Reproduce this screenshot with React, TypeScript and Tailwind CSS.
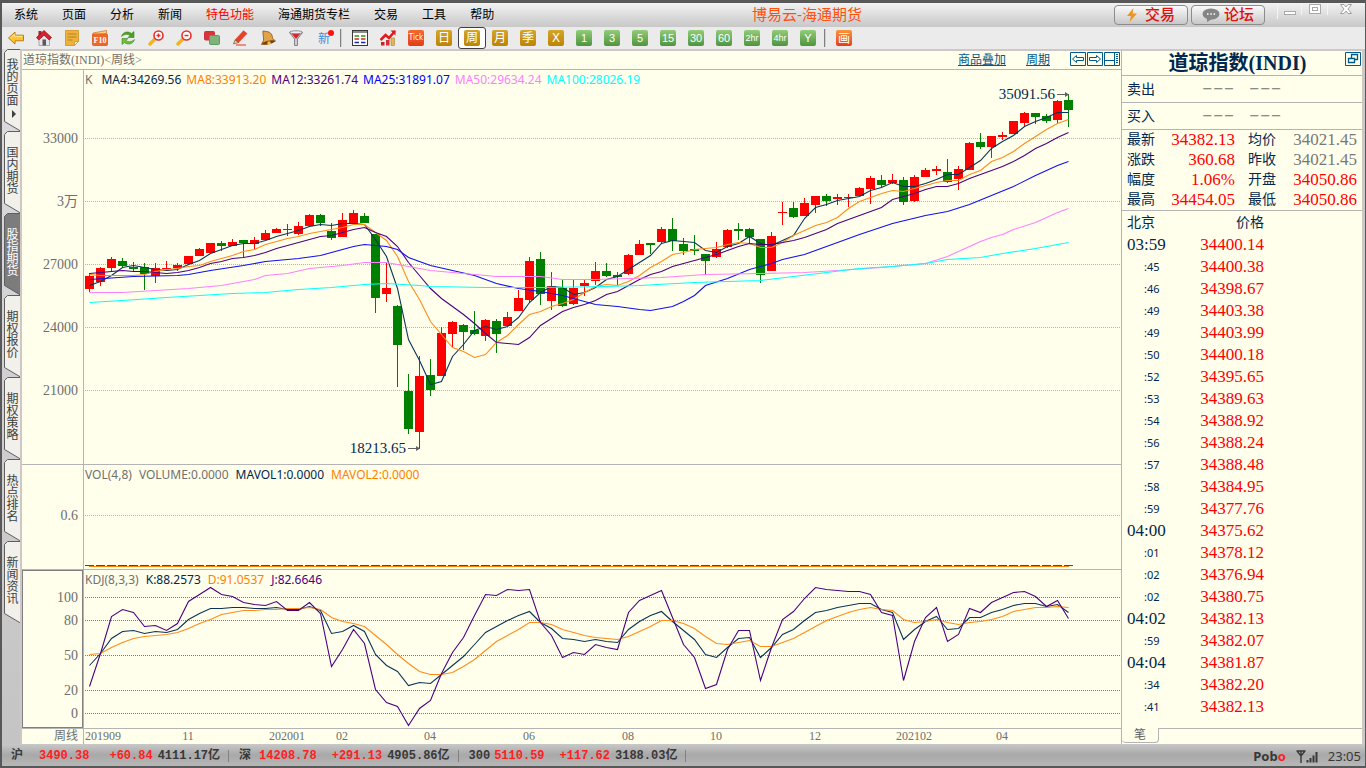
import type { ReactNode } from 'react';

const SERIF = "font-['Liberation_Serif','Noto_Sans_CJK_SC',serif]";
const SANS = "font-['Noto_Sans','Noto_Sans_CJK_SC',sans-serif]";
const MONO = "font-['Liberation_Mono','Noto_Sans_CJK_SC',monospace]";

const menus = ['系统', '页面', '分析', '新闻', '特色功能', '海通期货专栏', '交易', '工具', '帮助'];

const sideTabs = ['我的页面', '国内期货', '股指期货', '期权报价', '期权策略', '热点排名', '新闻资讯'];

const periods = [
  { label: '日', kind: 'gold' },
  { label: '周', kind: 'gold' },
  { label: '月', kind: 'gold' },
  { label: '季', kind: 'gold' },
  { label: 'X', kind: 'gold' },
  { label: '1', kind: 'green' },
  { label: '3', kind: 'green' },
  { label: '5', kind: 'green' },
  { label: '15', kind: 'green' },
  { label: '30', kind: 'green' },
  { label: '60', kind: 'green' },
  { label: '2hr', kind: 'green' },
  { label: '4hr', kind: 'green' },
  { label: 'Y', kind: 'green' },
];

// [direction, high, body top, body bottom, low]
type Candle = [string, number, number, number, number];

const candles: Candle[] = [
  ['r', 273, 276, 289, 292], ['r', 267, 268, 282, 286], ['r', 257, 259, 268, 271],
  ['g', 258, 261, 266, 268], ['g', 262, 267, 269, 271], ['g', 263, 267, 274, 290],
  ['r', 263, 268, 276, 283], ['r', 261, 268, 269, 269], ['r', 263, 265, 268, 271],
  ['r', 256, 256, 264, 264], ['r', 248, 249, 256, 256], ['r', 243, 243, 253, 253],
  ['g', 241, 243, 246, 251], ['r', 239, 242, 246, 246], ['g', 240, 240, 243, 258],
  ['r', 237, 240, 244, 249], ['r', 230, 233, 240, 240], ['r', 228, 229, 233, 233],
  ['g', 224, 229, 230, 236], ['r', 222, 226, 234, 235], ['r', 214, 215, 226, 227],
  ['g', 214, 215, 223, 226], ['g', 223, 231, 238, 240], ['r', 213, 220, 237, 237],
  ['r', 210, 213, 224, 224], ['g', 213, 216, 223, 223], ['g', 234, 234, 298, 313],
  ['r', 263, 288, 294, 302], ['g', 305, 306, 345, 387], ['g', 374, 391, 429, 434],
  ['r', 356, 376, 432, 449], ['g', 359, 375, 390, 396], ['r', 327, 333, 376, 376],
  ['r', 321, 322, 334, 347], ['g', 324, 325, 332, 350], ['g', 311, 330, 334, 335],
  ['r', 319, 320, 336, 341], ['g', 319, 321, 334, 353], ['r', 312, 317, 326, 326],
  ['r', 290, 298, 311, 311], ['r', 257, 261, 300, 303], ['g', 252, 259, 294, 305],
  ['r', 272, 286, 301, 310], ['g', 279, 288, 306, 307], ['r', 280, 288, 304, 305],
  ['r', 280, 283, 286, 296], ['r', 262, 271, 281, 285], ['g', 263, 271, 276, 277],
  ['g', 272, 275, 277, 285], ['r', 254, 255, 274, 275], ['r', 240, 244, 255, 255],
  ['g', 243, 243, 245, 254], ['r', 227, 229, 242, 244], ['g', 218, 229, 241, 251],
  ['g', 238, 244, 251, 255], ['g', 235, 249, 251, 255], ['g', 254, 254, 261, 274],
  ['r', 242, 249, 257, 258], ['r', 229, 230, 247, 248], ['g', 223, 229, 231, 240],
  ['g', 228, 229, 237, 243], ['g', 239, 239, 275, 283], ['r', 232, 236, 271, 271],
  ['r', 202, 212, 213, 225], ['g', 202, 208, 217, 218], ['r', 198, 203, 216, 216],
  ['r', 196, 196, 205, 213], ['g', 194, 196, 201, 206], ['r', 194, 197, 199, 205],
  ['r', 194, 197, 198, 207], ['r', 187, 188, 196, 196], ['r', 176, 178, 189, 204],
  ['g', 175, 180, 185, 188], ['r', 174, 180, 183, 184], ['g', 177, 180, 202, 205],
  ['r', 175, 177, 201, 202], ['r', 168, 170, 177, 177], ['r', 166, 169, 171, 175],
  ['g', 159, 172, 182, 183], ['r', 166, 169, 179, 190], ['r', 142, 143, 170, 170],
  ['g', 133, 142, 147, 149], ['r', 136, 136, 147, 158], ['r', 132, 135, 137, 140],
  ['r', 121, 121, 134, 134], ['r', 112, 113, 123, 126], ['g', 113, 113, 117, 124],
  ['g', 114, 116, 121, 123], ['r', 100, 101, 120, 123], ['g', 94, 100, 110, 127],
];

const ma4 = [285, 281, 275, 267, 265, 267, 269, 270, 269, 264, 260, 253, 249, 245, 243, 243, 240, 236, 233, 230, 226, 224, 225, 223, 223, 224, 239, 256, 288, 339, 360, 384, 381, 356, 344, 330, 326, 329, 326, 317, 302, 292, 286, 287, 294, 292, 287, 279, 276, 269, 262, 255, 243, 240, 241, 242, 250, 252, 246, 243, 236, 243, 245, 240, 235, 218, 207, 204, 200, 198, 196, 190, 187, 182, 186, 186, 183, 179, 174, 174, 167, 160, 148, 141, 135, 126, 121, 117, 112, 112];
const ma8 = [274, 275, 275, 275, 275, 274, 271, 269, 268, 266, 265, 261, 258, 255, 251, 249, 244, 241, 238, 236, 233, 231, 229, 227, 224, 224, 232, 240, 256, 281, 299, 321, 334, 347, 351, 357, 354, 342, 335, 324, 314, 311, 306, 303, 299, 292, 286, 284, 285, 281, 275, 267, 261, 254, 252, 249, 248, 247, 244, 242, 243, 247, 247, 242, 235, 230, 225, 222, 217, 208, 201, 197, 193, 190, 191, 188, 185, 182, 180, 180, 174, 170, 161, 157, 151, 143, 136, 129, 123, 119];
const ma12 = [273, 272, 271, 270, 271, 271, 272, 273, 272, 270, 267, 263, 261, 258, 257, 255, 252, 248, 245, 242, 239, 236, 235, 232, 229, 227, 232, 236, 246, 262, 275, 288, 298, 306, 314, 323, 333, 342, 343, 344, 337, 325, 318, 311, 307, 304, 300, 294, 291, 285, 279, 274, 271, 266, 263, 260, 257, 254, 250, 246, 243, 244, 244, 242, 240, 237, 233, 229, 223, 219, 215, 211, 207, 199, 196, 193, 189, 186, 186, 183, 178, 174, 170, 166, 161, 155, 148, 143, 137, 132];

// slower averages only need a knot where the slope changes: [bar index, y]
type Knot = [number, number];

const ma25: Knot[] = [[0, 279], [4, 276], [8, 275], [9, 274], [11, 270], [14, 265], [16, 261], [19, 258], [21, 255], [22, 252], [24, 246], [25, 244], [27, 246], [28, 249], [29, 257], [31, 265], [35, 275], [37, 283], [39, 288], [41, 291], [43, 295], [45, 301], [46, 304], [48, 306], [50, 309], [51, 310], [52, 308], [53, 306], [54, 301], [55, 295], [56, 285], [58, 278], [60, 269], [62, 263], [63, 259], [65, 254], [66, 250], [70, 234], [73, 223], [76, 215], [78, 211], [80, 204], [82, 195], [84, 186], [86, 175], [88, 165], [89, 161]];
const ma50: Knot[] = [[0, 292], [3, 292], [6, 290], [9, 288], [12, 285], [15, 279], [16, 275], [18, 273], [20, 268], [23, 265], [25, 262], [27, 262], [29, 266], [31, 270], [35, 274], [37, 276], [41, 276], [43, 279], [46, 279], [49, 278], [52, 277], [56, 274], [61, 273], [65, 272], [68, 270], [72, 267], [74, 265], [76, 263], [78, 256], [79, 251], [81, 241], [82, 237], [83, 234], [84, 229], [86, 222], [88, 212], [89, 208]];
const ma100: Knot[] = [[0, 302], [3, 300], [7, 297], [10, 295], [13, 293], [16, 292], [19, 289], [22, 287], [25, 284], [27, 283], [30, 285], [31, 286], [36, 287], [41, 287], [47, 286], [50, 285], [55, 282], [58, 281], [61, 280], [64, 276], [67, 272], [70, 268], [73, 266], [76, 263], [78, 259], [81, 257], [83, 253], [86, 248], [89, 242]];

const kLine = [665, 653, 638, 631, 630, 633, 631, 632, 629, 619, 613, 608, 608, 607, 607, 608, 608, 607, 609, 609, 606, 610, 633, 631, 625, 631, 654, 665, 671, 685, 682, 683, 674, 665, 656, 644, 632, 626, 620, 615, 611, 622, 628, 638, 639, 641, 639, 641, 642, 629, 621, 615, 611, 621, 630, 639, 654, 657, 647, 638, 637, 657, 647, 634, 629, 620, 612, 610, 607, 605, 603, 603, 609, 612, 639, 629, 621, 616, 629, 628, 617, 617, 612, 609, 605, 603, 603, 606, 604, 612];
const dLine = [654, 653, 647, 642, 638, 636, 635, 634, 632, 628, 623, 619, 614, 612, 610, 610, 609, 609, 608, 608, 607, 609, 617, 621, 623, 626, 635, 644, 654, 663, 671, 674, 674, 672, 666, 659, 650, 641, 635, 629, 622, 622, 624, 629, 632, 635, 637, 638, 639, 636, 631, 626, 620, 620, 623, 628, 636, 643, 644, 642, 640, 646, 646, 642, 638, 632, 626, 620, 616, 612, 609, 607, 609, 610, 619, 622, 621, 619, 622, 624, 622, 621, 619, 616, 611, 609, 607, 607, 606, 607];
const jLine = [686, 653, 616, 609, 612, 626, 625, 630, 623, 601, 594, 587, 594, 596, 602, 604, 605, 601, 610, 610, 602, 613, 666, 649, 629, 643, 689, 702, 706, 725, 708, 700, 673, 652, 637, 615, 594, 595, 589, 590, 589, 622, 635, 657, 652, 654, 644, 647, 649, 612, 600, 595, 590, 617, 644, 657, 688, 684, 649, 630, 630, 680, 647, 619, 611, 598, 587, 589, 590, 591, 591, 594, 612, 615, 680, 641, 617, 607, 641, 634, 608, 612, 602, 597, 592, 591, 596, 606, 600, 618];

const quotes = [
  ['最新', '34382.13', 'text-[#ff0000]', '均价', '34021.45', 'text-[#787878]'],
  ['涨跌', '360.68', 'text-[#ff0000]', '昨收', '34021.45', 'text-[#787878]'],
  ['幅度', '1.06%', 'text-[#ff0000]', '开盘', '34050.86', 'text-[#ff0000]'],
  ['最高', '34454.05', 'text-[#ff0000]', '最低', '34050.86', 'text-[#ff0000]'],
];

const ticks = [
  ['03:59', '34400.14'], [':45', '34400.38'], [':46', '34398.67'], [':49', '34403.38'],
  [':49', '34403.99'], [':50', '34400.18'], [':52', '34395.65'], [':53', '34389.63'],
  [':54', '34388.92'], [':56', '34388.24'], [':57', '34388.48'], [':58', '34384.95'],
  [':59', '34377.76'], ['04:00', '34375.62'], [':01', '34378.12'], [':02', '34376.94'],
  [':02', '34380.75'], ['04:02', '34382.13'], [':59', '34382.07'], ['04:04', '34381.87'],
  [':34', '34382.20'], [':41', '34382.13'],
];

const dates: [string, number][] = [
  ['201909', 102], ['11', 187], ['202001', 286], ['02', 341], ['04', 429], ['06', 528],
  ['08', 627], ['10', 715], ['12', 814], ['202102', 913], ['04', 1001],
];

const barX = (i: number) => 89 + i * 11;
const dense = (ys: number[]) => ys.map((y, i) => `${barX(i) + 0.5},${y + 0.5}`).join(' ');
const sparse = (ks: Knot[]) => ks.map(([i, y]) => `${barX(i) + 0.5},${y + 0.5}`).join(' ');

function Curve({ points, color }: { points: string; color: string }) {
  return <polyline points={points} fill="none" stroke={color} strokeWidth="1.1" />;
}

// lines span the full width of the plot whatever the window size
function Grid({ ys, top, color }: { ys: number[]; top: number; color: string }) {
  return (
    <>
      {ys.map((y) => (
        <line key={y} x1="1" x2="100%" y1={y - top + 0.5} y2={y - top + 0.5} stroke={color} strokeDasharray="1 1" shapeRendering="crispEdges" />
      ))}
    </>
  );
}

function Axis({ labels, top, height }: { labels: [string, number][]; top: number; height: number }) {
  return (
    <svg width="61" height={height} className={`block shrink-0 text-[14px] ${SERIF}`} fill="#6e6e6e">
      {labels.map(([text, y]) => (
        <text key={text} x="56" y={y - top + 5} textAnchor="end">{text}</text>
      ))}
    </svg>
  );
}

function PriceChart() {
  return (
    <svg className="block h-[374px] w-full overflow-visible">
      <Grid ys={[138, 201, 264, 327, 390]} top={90} color="#b4b4b0" />
      <g transform="translate(-84 -90)">
        {candles.map(([dir, high, top, bottom, low], i) => (
          <g key={i} fill={dir === 'r' ? '#ff0000' : '#008000'} shapeRendering="crispEdges">
            <rect x={barX(i)} y={high} width="1" height={low - high} />
            <rect x={barX(i) - 4} y={top} width="9" height={bottom - top} />
          </g>
        ))}
        <Curve points={dense(ma4)} color="#0a3558" />
        <Curve points={dense(ma8)} color="#ff8c1a" />
        <Curve points={dense(ma12)} color="#4b0082" />
        <Curve points={sparse(ma25)} color="#1010f0" />
        <Curve points={sparse(ma50)} color="#ff80ff" />
        <Curve points={sparse(ma100)} color="#00ffff" />
        <g fill="#002850" className={`text-[15px] ${SERIF}`}>
          <text x="1055" y="99" textAnchor="end">35091.56</text>
          <text x="406" y="453" textAnchor="end">18213.65</text>
        </g>
        <g stroke="#606060" fill="#606060">
          <path d="M1057 94.5H1068M408 448.5H419" />
          <path d="M1065 92l4 2.5-4 2.5zM416 446l4 2.5-4 2.5z" stroke="none" />
        </g>
      </g>
    </svg>
  );
}

function VolumeChart() {
  return (
    <svg className="block h-[84px] w-full">
      <Grid ys={[515]} top={485} color="#b4b4b0" />
      <g transform="translate(-84 -485)" shapeRendering="crispEdges">
        {candles.map(([dir], i) => (
          <rect key={i} x={barX(i) - 4} y="565" width="9" height="1" fill={dir === 'r' ? '#ff0000' : '#008000'} />
        ))}
        <rect x="89" y="566" width="980" height="1" fill="#ff8000" />
      </g>
    </svg>
  );
}

function KdjChart() {
  return (
    <svg className="block h-[138px] w-full overflow-visible">
      <Grid ys={[597, 620, 655, 690, 713]} top={590} color="#7c7c78" />
      <g transform="translate(-84 -590)">
        <Curve points={dense(kLine)} color="#0a3558" />
        <Curve points={dense(dLine)} color="#ff8c1a" />
        <Curve points={dense(jLine)} color="#4b0082" />
      </g>
    </svg>
  );
}

function Legend({ items, gap }: { items: [string, string][]; gap: string }) {
  return (
    <div className={`flex h-5 items-center pl-px text-[12px] whitespace-nowrap ${gap} ${SANS}`}>
      {items.map(([text, color]) => (
        <span key={text} className={color}>{text}</span>
      ))}
    </div>
  );
}

function ToolButton({ label, children, active }: { label: string; children: ReactNode; active?: boolean }) {
  return (
    <button
      type="button"
      aria-label={label}
      className={`flex h-[22px] w-7 shrink-0 items-center justify-center ${active ? 'rounded-[3px] border border-[#404040] bg-white' : ''}`}
    >
      {children}
    </button>
  );
}

function Icon({ children }: { children: ReactNode }) {
  return <svg width="16" height="16" viewBox="0 0 16 16">{children}</svg>;
}

function Separator() {
  return <span className="mr-1 ml-0.5 h-[18px] w-0.5 shrink-0 border-l border-[#808080] bg-[#d0d0d0]" />;
}

function Toolbar() {
  return (
    <div className="flex h-[22px] items-center bg-[#ebebeb]">
      <ToolButton label="后退">
        <Icon>
          <path d="M0.5 8L7 2v3.2h8.500v5.600H7V14z" fill="#fdc52f" stroke="#b97f14" />
          <path d="M2.500 8L6.500 4.300v2h8" fill="none" stroke="#ffe892" />
        </Icon>
      </ToolButton>
      <ToolButton label="首页">
        <Icon>
          <path d="M3 8v7.500h10.500V8L8 3z" fill="#e4e4ea" stroke="#8f8f98" strokeWidth="0.700" />
          <rect x="2.500" y="1" width="3" height="5" fill="#9a2830" />
          <path d="M8 0.500L0.500 7.500l2.300 2.500L8 5.200l5.200 4.800L15.500 7.500z" fill="#d8222c" stroke="#8c1018" strokeWidth="0.700" />
          <rect x="6.500" y="9.500" width="3.500" height="6" fill="#575862" />
        </Icon>
      </ToolButton>
      <ToolButton label="便签">
        <Icon>
          <path d="M1.500 0.500h13v11l-4 4h-9z" fill="#eeb13c" stroke="#d79d32" />
          <path d="M14.500 11.500l-4 4v-4z" fill="#fff0b4" stroke="#c98d22" strokeWidth="0.700" />
          <path d="M3.500 4h9M3.500 7h9M3.500 10h5" stroke="#b98220" />
        </Icon>
      </ToolButton>
      <ToolButton label="F10 资料">
        <Icon>
          <path d="M1 3l13.500-2.500v3L1 5z" fill="#ffd27a" stroke="#cf6d22" strokeWidth="0.700" />
          <rect x="0.500" y="4" width="15" height="11.500" rx="1" fill="#ec6a28" stroke="#e0652b" />
          <text x="8" y="13" textAnchor="middle" fill="#fff" className="font-['Liberation_Serif',serif] text-[8px] font-bold">F10</text>
        </Icon>
      </ToolButton>
      <ToolButton label="刷新">
        <Icon>
          <path d="M1.500 6.500C2.500 2 8 0.500 11.500 3.500L14 1.500v6H8l2-2C7.500 3.500 4.500 4 1.500 6.500z" fill="#47a51f" stroke="#2c7412" strokeWidth="0.500" />
          <path d="M14.500 9.500C13.500 14 8 15.500 4.500 12.500L2 14.500v-6h6l-2 2c2.500 2 5.500 1.500 8.500-1z" fill="#6cc437" stroke="#2c7412" strokeWidth="0.500" />
        </Icon>
      </ToolButton>
      <ToolButton label="放大">
        <Icon>
          <path d="M6.500 9.500L2 14" stroke="#f3b416" strokeWidth="3.500" strokeLinecap="round" />
          <circle cx="10.500" cy="5.500" r="4.500" fill="#fff" stroke="#e0322c" strokeWidth="1.600" />
          <path d="M8.500 5.500h4M10.500 3.500v4" stroke="#e0322c" strokeWidth="1.500" />
        </Icon>
      </ToolButton>
      <ToolButton label="缩小">
        <Icon>
          <path d="M6.500 9.500L2 14" stroke="#f3b416" strokeWidth="3.500" strokeLinecap="round" />
          <circle cx="10.500" cy="5.500" r="4.500" fill="#fff" stroke="#e0322c" strokeWidth="1.600" />
          <path d="M8.500 5.500h4" stroke="#e0322c" strokeWidth="1.500" />
        </Icon>
      </ToolButton>
      <ToolButton label="叠加">
        <Icon>
          <rect x="0.500" y="1.500" width="10" height="8.500" rx="1" fill="#d9343a" stroke="#c9353c" />
          <rect x="5.500" y="5.500" width="10" height="9" rx="1" fill="#7fb37c" stroke="#5b9a60" />
        </Icon>
      </ToolButton>
      <ToolButton label="画线">
        <Icon>
          <path d="M3 10L11.500 0.800l3.500 2.700L6.500 12.500z" fill="#e8412a" stroke="#d8341f" strokeWidth="0.600" />
          <path d="M3 10l3.500 2.500L1.500 14z" fill="#f3d0a0" stroke="#5b3a22" strokeWidth="0.600" />
          <path d="M4 15h10" stroke="#f04b3c" strokeWidth="1.200" />
        </Icon>
      </ToolButton>
      <ToolButton label="预警">
        <Icon>
          <path d="M3 1l3.500 0.500C11 2 12.500 5 12.500 8.500L15.500 11 1.500 14.500 3.500 10.500C4 7 2.500 4 3 1z" fill="#e0a448" stroke="#8a4f10" strokeWidth="0.800" />
          <ellipse cx="8.500" cy="12.500" rx="6.500" ry="1.800" fill="#7c3d0c" transform="rotate(-13 8.500 12.500)" />
          <circle cx="9" cy="13" r="1.800" fill="#f1c04a" />
        </Icon>
      </ToolButton>
      <ToolButton label="筛选">
        <Icon>
          <path d="M1.500 2.500L6.500 9v6.500h3V9l5-6.500z" fill="#c9ccd0" stroke="#6d7076" strokeWidth="0.800" />
          <path d="M3.500 3.500h9L8 9z" fill="#e2202a" />
          <ellipse cx="8" cy="2.300" rx="6.500" ry="1.500" fill="#eceef0" stroke="#77797e" strokeWidth="0.800" />
        </Icon>
      </ToolButton>
      <ToolButton label="新功能">
        <span className="relative font-['Noto_Sans_CJK_SC',sans-serif] text-[12px] leading-4 text-[#3d8edb]">
          新
          <i className="absolute top-0 right-[-4px] size-[6px] rounded-full bg-[#ff1010]" />
        </span>
      </ToolButton>
      <Separator />
      <ToolButton label="报价表">
        <Icon>
          <rect x="0.500" y="0.500" width="15" height="15" fill="#fff" stroke="#383838" />
          <path d="M1 2h14" stroke="#8a8a8a" strokeWidth="2" />
          <path d="M2.500 6h4.500M9 6h4.500" stroke="#1b9b1b" strokeWidth="1.300" />
          <path d="M2.500 9h4.500M9 9h4.500" stroke="#e02020" strokeWidth="1.300" />
          <path d="M2.500 12.500h4.500M9 12.500h4.500" stroke="#1c2a9c" strokeWidth="1.300" />
        </Icon>
      </ToolButton>
      <ToolButton label="走势图">
        <Icon>
          <path d="M0.500 10l5-5 3.500 3L15 1" fill="none" stroke="#e01b1b" strokeWidth="2.500" />
          <path d="M10.500 0.500h5V5.500z" fill="#e01b1b" />
          <rect x="1" y="12" width="3.500" height="3.500" fill="#c22" />
          <rect x="6" y="10" width="3.500" height="5.500" fill="#d43030" />
          <rect x="11" y="8" width="3.500" height="7.500" fill="#e2b65a" stroke="#9c7020" strokeWidth="0.500" />
        </Icon>
      </ToolButton>
      <ToolButton label="Tick">
        <span className="flex size-4 items-center justify-center rounded-[2px] bg-linear-to-b from-[#f56a2c] to-[#e33a1a] font-['DejaVu_Sans_Condensed','Noto_Sans',sans-serif] text-[8px] text-white">Tick</span>
      </ToolButton>
      {periods.map(({ label, kind }) => (
        <ToolButton key={label} label={`周期 ${label}`} active={label === '周'}>
          <span
            className={`flex size-4 items-center justify-center rounded-[2px] bg-linear-to-b font-['Liberation_Sans','Noto_Sans_CJK_SC',sans-serif] leading-4 text-white ${
              kind === 'gold' ? 'from-[#d3a52a] to-[#bd8400] text-[12px]' : 'from-[#93cc78] to-[#4f9440]'
            } ${kind === 'green' ? (label.length > 2 ? 'text-[9px]' : 'text-[11px]') : ''}`}
          >
            {label}
          </span>
        </ToolButton>
      ))}
      <Separator />
      <ToolButton label="画面">
        <span className="flex size-4 items-center justify-center rounded-[2px] bg-linear-to-b from-[#f7953a] to-[#e63a1a] font-['Noto_Sans_CJK_SC',sans-serif] text-[12px] leading-4 text-white">画</span>
      </ToolButton>
    </div>
  );
}

function TitleBar() {
  return (
    <header className="flex h-6 items-center bg-linear-to-b from-[#f2f2f2] to-[#c8c8c8] font-['Liberation_Sans','Noto_Sans_CJK_SC',sans-serif]">
      <nav className="flex gap-6 pl-3 text-[12px] text-black">
        {menus.map((m) => (
          <button key={m} type="button" className={`whitespace-nowrap ${m === '特色功能' ? 'text-[#ff0000]' : ''}`}>{m}</button>
        ))}
      </nav>
      <h1 className="flex-1 pl-1.5 text-center text-[15px] leading-5 whitespace-nowrap text-[#ff5010]">博易云-海通期货</h1>
      <div className="flex gap-[3px]">
        <button type="button" className="flex h-5 w-[74px] items-center justify-center gap-2 rounded border border-[#8c8c8c] bg-linear-to-b from-[#fafafa] to-[#c8c8c8] text-[15px] leading-4 font-medium text-[#e01010]">
          <svg width="10" height="14" viewBox="0 0 10 14"><path d="M6.500 0L0 8h4L2.500 14 10 5.500H5.500z" fill="#f0921e" /></svg>
          交易
        </button>
        <button type="button" className="flex h-5 w-[74px] items-center justify-center gap-1 rounded border border-[#8c8c8c] bg-linear-to-b from-[#fafafa] to-[#c8c8c8] text-[15px] leading-4 font-medium text-[#e01010]">
          <svg width="18" height="14" viewBox="0 0 18 14">
            <ellipse cx="9" cy="6" rx="8.500" ry="5.500" fill="#858585" />
            <path d="M5 10v4l5-3z" fill="#858585" />
            <path d="M5 6h1.500M8.300 6h1.500M11.600 6h1.500" stroke="#fff" strokeWidth="1.500" />
          </svg>
          论坛
        </button>
      </div>
      <div className="mr-0.5 ml-3 flex self-start">
        <button type="button" aria-label="最小化" className="flex h-4 w-6 items-center justify-center border-l border-[#f4f4f4]">
          <svg width="12" height="12"><rect x="0.500" y="6.500" width="11" height="3" fill="#fff" stroke="#a8a8a8" /></svg>
        </button>
        <button type="button" aria-label="最大化" className="flex h-3 w-[26px] items-center justify-center border-l border-[#f4f4f4]">
          <svg width="12" height="10"><rect x="0.500" y="0.500" width="11" height="9" fill="#fff" stroke="#a8a8a8" /><rect x="3.500" y="3.500" width="5" height="3" fill="#fff" stroke="#a8a8a8" /></svg>
        </button>
        <button type="button" aria-label="关闭" className="flex h-3 w-9 items-center justify-center border-l border-[#f4f4f4]">
          <svg width="12" height="10" viewBox="0 0 12 10"><path d="M0.500 0.500h3.500l2 2.500 2-2.500h3.500L8 5l3.500 4.500H8L6 7 4 9.500H0.500L4 5z" fill="#fff" stroke="#a0a0a0" /></svg>
        </button>
      </div>
    </header>
  );
}

function SideTabs() {
  return (
    <aside className="flex w-[18px] shrink-0 flex-col items-end bg-linear-to-b from-[#dcdce0] to-[#c4c4c4]">
      {sideTabs.map((t, i) => {
        const active = t === '股指期货';
        return (
          <button key={t} type="button" className="relative h-[82px] w-4">
            <svg className="absolute inset-0" width="16" height="82">
              <path d="M16.500 0.500H3.500L0.500 3.500V72.500L16.500 82z" fill={active ? '#7c7c7c' : '#f1f0ea'} stroke="#5e5e5e" />
            </svg>
            <span
              className={`relative flex h-full w-full flex-col items-center font-['Noto_Sans_CJK_SC',sans-serif] text-[12px] leading-4 ${i === 0 ? 'pt-[9px]' : 'pt-[15px]'} ${active ? 'text-white' : 'text-[#404040]'}`}
            >
              <span className="[writing-mode:vertical-rl]">{t}</span>
              {i === 0 && <svg className="mt-1 ml-1" width="5" height="8"><path d="M0 0l4 4-4 4z" fill="#404040" /></svg>}
            </span>
          </button>
        );
      })}
    </aside>
  );
}

function ChartArea() {
  return (
    <section className="min-w-0 flex-1">
      <div className={`flex h-[19px] items-center border-b border-[#b4b4b4] pr-px pl-px text-[12px] leading-4 ${SERIF}`}>
        <h2 className="text-[#707070]">道琼指数(INDI)&lt;周线&gt;</h2>
        <a href="#overlay" className="mr-5 ml-auto text-[#005a8c] underline">商品叠加</a>
        <a href="#period" className="mr-5 text-[#005a8c] underline">周期</a>
        <div className="flex gap-px self-start pt-px">
          <button type="button" aria-label="左移">
            <svg width="16" height="14" fill="none" stroke="#005a8c"><path d="M0.500 0.500h15v13H0.500zM2.500 7L6.500 3.500v2h7v3h-7v2z" /></svg>
          </button>
          <button type="button" aria-label="右移">
            <svg width="16" height="14" fill="none" stroke="#005a8c"><path d="M0.500 0.500h15v13H0.500zM13.500 7L9.500 3.500v2h-7v3h7v2z" /></svg>
          </button>
          <button type="button" aria-label="分栏">
            <svg width="16" height="14" fill="none" stroke="#005a8c"><path d="M0.500 0.500h15v13H0.500zM10.500 0v14M0 8.500h10" /><path d="M13 2v10" strokeWidth="2" strokeDasharray="1 1" /></svg>
          </button>
        </div>
      </div>

      <div className="flex border-b border-[#b4b4b4]">
        <Axis labels={[['33000', 138], ['3万', 201], ['27000', 264], ['24000', 327], ['21000', 390]]} top={70} height={394} />
        <div className="min-w-0 flex-1 border-l border-[#b4b4b4]">
          <Legend
            gap="gap-[5px]"
            items={[
              ['K', 'text-[#707070] mr-1'],
              ['MA4:34269.56', 'text-[#002850]'],
              ['MA8:33913.20', 'text-[#ff8000]'],
              ['MA12:33261.74', 'text-[#4b0082]'],
              ['MA25:31891.07', 'text-[#0000ff]'],
              ['MA50:29634.24', 'text-[#ff80ff]'],
              ['MA100:28026.19', 'text-[#00ffff]'],
            ]}
          />
          <PriceChart />
        </div>
      </div>

      <div className="flex border-b border-[#b4b4b4]">
        <Axis labels={[['0.6', 515]]} top={465} height={104} />
        <div className="min-w-0 flex-1 border-l border-[#b4b4b4]">
          <Legend
            gap="gap-[7px]"
            items={[
              ['VOL(4,8)', 'text-[#707070]'],
              ['VOLUME:0.0000', 'text-[#707070]'],
              ['MAVOL1:0.0000', 'text-[#002850]'],
              ['MAVOL2:0.0000', 'text-[#ff8000]'],
            ]}
          />
          <VolumeChart />
        </div>
      </div>

      <div className="flex border-b border-[#b4b4b4]">
        <div className="outline outline-[#808080] -outline-offset-1">
          <Axis labels={[['100', 597], ['80', 620], ['50', 655], ['20', 690], ['0', 713]]} top={570} height={158} />
        </div>
        <div className="min-w-0 flex-1 border-l border-[#b4b4b4]">
          <Legend
            gap="gap-[7px]"
            items={[
              ['KDJ(8,3,3)', 'text-[#707070]'],
              ['K:88.2573', 'text-[#002850]'],
              ['D:91.0537', 'text-[#ff8000]'],
              ['J:82.6646', 'text-[#4b0082]'],
            ]}
          />
          <KdjChart />
        </div>
      </div>

      <div className={`flex text-[12px] leading-[15px] text-[#6e6e6e] ${SERIF}`}>
        <span className="w-[61px] pr-[5px] text-right">周线</span>
        <svg className="block h-[15px] flex-1 border-l border-[#b4b4b4]" fill="#6e6e6e">
          {dates.map(([text, x]) => (
            <text key={x} x={x - 83} y="11" textAnchor="middle">{text}</text>
          ))}
        </svg>
      </div>
    </section>
  );
}

function QuotePanel() {
  return (
    <section className={`flex w-[241px] shrink-0 flex-col border-l border-[#b4b4b4] text-[14px] text-[#002850] ${SERIF}`}>
      <div className="flex h-[25px] items-center border-b border-[#b4b4b4]">
        <h2 className="flex-1 pl-2 text-center text-[20px] leading-6 font-bold whitespace-nowrap">道琼指数(INDI)</h2>
        <button type="button" aria-label="还原窗口" className="self-start pt-px pr-px">
          <svg width="16" height="14" fill="none" stroke="#005a8c"><path d="M0.500 0.500h15v13H0.500z" /><path d="M6.500 7V2.500h6v5H10M3.500 6.500h6v4h-6z" strokeWidth="1.300" /></svg>
        </button>
      </div>
      {['卖出', '买入'].map((side) => (
        <div key={side} className="flex h-[27px] items-center border-b border-[#b4b4b4] pl-[5px]">
          <span className="w-[75px]">{side}</span>
          <span className="w-[47px] font-['DejaVu_Sans',sans-serif] text-[13px] text-[#707070]">−−−</span>
          <span className="font-['DejaVu_Sans',sans-serif] text-[13px] text-[#707070]">−−−</span>
        </div>
      ))}
      <div className="border-b border-[#b4b4b4]">
        <table className="w-full">
          <tbody>
            {quotes.map(([a, av, ac, b, bv, bc]) => (
              <tr key={a} className="h-5 leading-5">
                <th className="w-[33px] pl-[5px] text-left font-normal">{a}</th>
                <td className={`w-20 text-right text-[17px] leading-5 ${ac}`}>{av}</td>
                <th className="w-[42px] pl-[13px] text-left font-normal">{b}</th>
                <td className={`pr-[5px] text-right text-[17px] leading-5 ${bc}`}>{bv}</td>
              </tr>
            ))}
          </tbody>
        </table>
      </div>
      <table className="mt-px w-[142px] flex-none">
        <thead>
          <tr className="h-[22px] leading-[22px]">
            <th className="pl-[5px] text-left font-normal">北京</th>
            <th className="text-right font-normal">价格</th>
          </tr>
        </thead>
        <tbody>
          {ticks.map(([time, price], i) => (
            <tr key={i} className="h-[22px] leading-[22px]">
              {time.length > 3 ? (
                <td className="pl-[5px] text-[17px] leading-[22px]">{time}</td>
              ) : (
                <td className={`pl-[22px] text-[11px] ${SANS}`}>{time}</td>
              )}
              <td className="text-right text-[17px] leading-[22px] text-[#ff0000]">{price}</td>
            </tr>
          ))}
        </tbody>
      </table>
      <div className="mt-auto flex h-4">
        <button type="button" className="h-[15px] w-[37px] rounded-b border-r border-b border-[#b4b4b4] text-[12px] leading-[14px] text-[#606060]">笔</button>
        <span className="flex-1 border-t border-[#b4b4b4]" />
      </div>
    </section>
  );
}

function StatusBar() {
  const indices = [
    { name: '沪', last: '3490.38', change: '+60.84', turnover: '4111.17亿', nameGap: 'mr-4', lastGap: 'mr-5' },
    { name: '深', last: '14208.78', change: '+291.13', turnover: '4905.86亿', nameGap: 'mr-2', lastGap: 'mr-[15px]' },
    { name: '300', last: '5110.59', change: '+117.62', turnover: '3188.03亿', nameGap: 'mr-1', lastGap: 'mr-[15px]' },
  ];
  return (
    <footer className={`flex h-[22px] items-center bg-linear-to-b from-[#c8c8c8] via-[#a8a8a8] to-[#b8b8b8] pt-0.5 pl-[9px] text-[12px] font-bold whitespace-nowrap text-[#383838] ${MONO}`}>
      {indices.map(({ name, last, change, turnover, nameGap, lastGap }) => (
        <div key={name} className="flex items-center">
          <span className={nameGap}>{name}</span>
          <span className={`text-[#ff2020] ${lastGap}`}>{last}</span>
          <span className="mr-[5px] text-[#ff2020]">{change}</span>
          <span>{turnover}</span>
          <span className="mr-2.5 ml-2 h-3 w-px bg-[#808080]" />
        </div>
      ))}
      <div className={`ml-auto flex items-center gap-2.5 pr-1 ${SANS}`}>
        <span className="text-[13px] leading-4">Pob<span className="text-[#ff2020]">o</span></span>
        <svg width="22" height="13" viewBox="0 0 22 13" fill="none" stroke="#383838">
          <path d="M0.500 1h9M1 1l4 5 4-5M5 1v12" strokeWidth="1.400" />
          <path d="M11.500 10v2.500M14.500 8v4.500M17.500 5.500v7M20.500 2v10.500" strokeWidth="2" />
        </svg>
        <span className="text-[13px] leading-4 font-normal">23:05</span>
      </div>
    </footer>
  );
}

export default function App() {
  return (
    <div className="flex min-h-screen flex-col border-t-[3px] border-r border-b-2 border-l-2 border-[#585858] bg-[#ebebeb]">
      <TitleBar />
      <Toolbar />
      <main className="flex flex-1">
        <SideTabs />
        <div className="flex min-w-0 flex-1 border-t-2 border-r-[3px] border-l-2 border-[#cfc6c6] bg-[#ffffec]">
          <ChartArea />
          <QuotePanel />
        </div>
      </main>
      <StatusBar />
    </div>
  );
}
